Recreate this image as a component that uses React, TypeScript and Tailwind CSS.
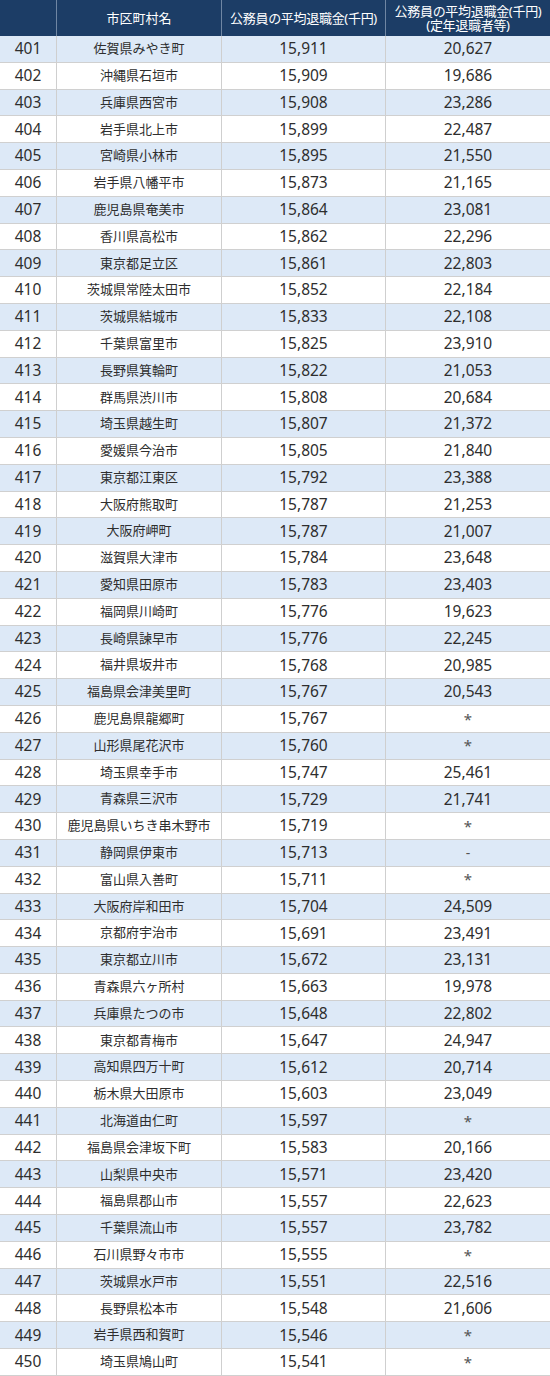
const rows: [string, string, string][] = [
  ["佐賀県みやき町", "15,911", "20,627"],
  ["沖縄県石垣市", "15,909", "19,686"],
  ["兵庫県西宮市", "15,908", "23,286"],
  ["岩手県北上市", "15,899", "22,487"],
  ["宮崎県小林市", "15,895", "21,550"],
  ["岩手県八幡平市", "15,873", "21,165"],
  ["鹿児島県奄美市", "15,864", "23,081"],
  ["香川県高松市", "15,862", "22,296"],
  ["東京都足立区", "15,861", "22,803"],
  ["茨城県常陸太田市", "15,852", "22,184"],
  ["茨城県結城市", "15,833", "22,108"],
  ["千葉県富里市", "15,825", "23,910"],
  ["長野県箕輪町", "15,822", "21,053"],
  ["群馬県渋川市", "15,808", "20,684"],
  ["埼玉県越生町", "15,807", "21,372"],
  ["愛媛県今治市", "15,805", "21,840"],
  ["東京都江東区", "15,792", "23,388"],
  ["大阪府熊取町", "15,787", "21,253"],
  ["大阪府岬町", "15,787", "21,007"],
  ["滋賀県大津市", "15,784", "23,648"],
  ["愛知県田原市", "15,783", "23,403"],
  ["福岡県川崎町", "15,776", "19,623"],
  ["長崎県諫早市", "15,776", "22,245"],
  ["福井県坂井市", "15,768", "20,985"],
  ["福島県会津美里町", "15,767", "20,543"],
  ["鹿児島県龍郷町", "15,767", "*"],
  ["山形県尾花沢市", "15,760", "*"],
  ["埼玉県幸手市", "15,747", "25,461"],
  ["青森県三沢市", "15,729", "21,741"],
  ["鹿児島県いちき串木野市", "15,719", "*"],
  ["静岡県伊東市", "15,713", "-"],
  ["富山県入善町", "15,711", "*"],
  ["大阪府岸和田市", "15,704", "24,509"],
  ["京都府宇治市", "15,691", "23,491"],
  ["東京都立川市", "15,672", "23,131"],
  ["青森県六ヶ所村", "15,663", "19,978"],
  ["兵庫県たつの市", "15,648", "22,802"],
  ["東京都青梅市", "15,647", "24,947"],
  ["高知県四万十町", "15,612", "20,714"],
  ["栃木県大田原市", "15,603", "23,049"],
  ["北海道由仁町", "15,597", "*"],
  ["福島県会津坂下町", "15,583", "20,166"],
  ["山梨県中央市", "15,571", "23,420"],
  ["福島県郡山市", "15,557", "22,623"],
  ["千葉県流山市", "15,557", "23,782"],
  ["石川県野々市市", "15,555", "*"],
  ["茨城県水戸市", "15,551", "22,516"],
  ["長野県松本市", "15,548", "21,606"],
  ["岩手県西和賀町", "15,546", "*"],
  ["埼玉県鳩山町", "15,541", "*"],
];

export default function App() {
  return (
    <div
      className="w-[550px] bg-white text-[#2e2e2e]"
      style={{ fontFamily: '"Noto Sans", "Noto Sans CJK JP", sans-serif' }}
    >
      {/* header */}
      <div className="grid grid-cols-[57px_165px_164px_164px] h-[36px] bg-[#1c3d66] text-white text-[13px] leading-[14px]">
        <div className="border-r border-[#6f86a3]" />
        <div className="flex items-center justify-center border-r border-[#6f86a3]">市区町村名</div>
        <div className="flex items-center justify-center border-r border-[#6f86a3] whitespace-nowrap tracking-[-0.3px]">
          公務員の平均退職金(千円)
        </div>
        <div className="flex items-center justify-center">
          <p className="text-center whitespace-nowrap tracking-[-0.3px]">
            公務員の平均退職金(千円)
            <br />
            (定年退職者等)
          </p>
        </div>
      </div>

      {/* body */}
      {rows.map(([name, avg, retire], i) => (
        <div
          key={i}
          className={`grid grid-cols-[57px_165px_164px_164px] h-[26.8px] border-b border-[#d0d0d0] ${
            i % 2 === 0 ? "bg-[#dde9f7]" : "bg-white"
          }`}
        >
          <div className="flex items-center justify-center border-r border-[#cfcfcf] text-[15.5px]">{401 + i}</div>
          <div className="flex items-center justify-center border-r border-[#cfcfcf] whitespace-nowrap text-[13px]">
            {name}
          </div>
          <div className="flex items-center justify-center border-r border-[#cfcfcf] text-[15.5px]">{avg}</div>
          <div
            className={`flex items-center justify-center ${
              retire === "*" ? "text-[15px] text-[#555]" : retire === "-" ? "text-[14px] text-[#555]" : "text-[15.5px]"
            }`}
          >
            {retire}
          </div>
        </div>
      ))}
    </div>
  );
}
